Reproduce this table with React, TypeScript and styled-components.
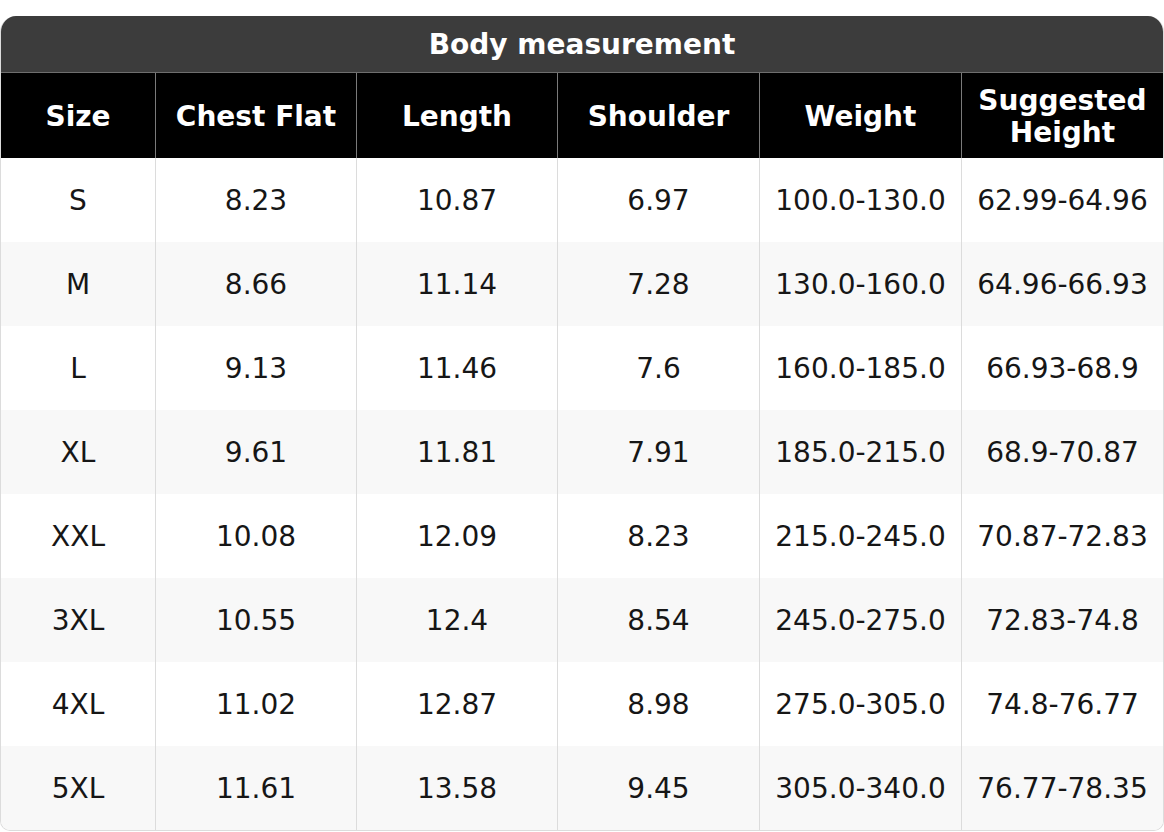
import React from 'react'
import styled, { createGlobalStyle } from 'styled-components'

const GlobalStyle = createGlobalStyle`
  html, body {
    margin: 0;
    padding: 0;
    background: #ffffff;
  }
  body {
    font-family: 'DejaVu Sans', 'Liberation Sans', sans-serif;
  }
`

const Page = styled.div`
  padding-top: 16px;
`

const Table = styled.section`
  box-sizing: border-box;
  width: 1164px;
  border: 1px solid #dcdcdc;
  border-top: none;
  border-radius: 16px 16px 10px 10px;
  overflow: hidden;
`

const Title = styled.div`
  height: 56px;
  background: #3c3c3c;
  color: #ffffff;
  font-weight: bold;
  font-size: 28px;
  display: flex;
  align-items: center;
  justify-content: center;
  border-bottom: 1px solid #6e6e6e;
  margin: 0 -1px;
`

const Row = styled.div<{ $head?: boolean; $alt?: boolean }>`
  display: grid;
  grid-template-columns: 154px 201px 201px 202px 202px 1fr;
  height: ${(p) => (p.$head ? 85 : 84)}px;
  background: ${(p) => (p.$head ? '#000000' : p.$alt ? '#f8f8f8' : '#ffffff')};
  color: ${(p) => (p.$head ? '#ffffff' : '#161616')};
  font-weight: ${(p) => (p.$head ? 'bold' : 'normal')};
  font-size: 28px;
`

const Cell = styled.div<{ $head?: boolean }>`
  box-sizing: border-box;
  display: flex;
  align-items: center;
  justify-content: center;
  text-align: center;
  line-height: 32px;
  padding-top: 2px;
  border-left: 1px solid ${(p) => (p.$head ? '#7a7a7a' : '#dcdcdc')};

  &:first-child {
    border-left: none;
  }
`

const headers = ['Size', 'Chest Flat', 'Length', 'Shoulder', 'Weight', 'Suggested Height']

const rows = [
  ['S', '8.23', '10.87', '6.97', '100.0-130.0', '62.99-64.96'],
  ['M', '8.66', '11.14', '7.28', '130.0-160.0', '64.96-66.93'],
  ['L', '9.13', '11.46', '7.6', '160.0-185.0', '66.93-68.9'],
  ['XL', '9.61', '11.81', '7.91', '185.0-215.0', '68.9-70.87'],
  ['XXL', '10.08', '12.09', '8.23', '215.0-245.0', '70.87-72.83'],
  ['3XL', '10.55', '12.4', '8.54', '245.0-275.0', '72.83-74.8'],
  ['4XL', '11.02', '12.87', '8.98', '275.0-305.0', '74.8-76.77'],
  ['5XL', '11.61', '13.58', '9.45', '305.0-340.0', '76.77-78.35'],
]

const App: React.FC = () => (
  <Page>
    <GlobalStyle />
    <Table>
      <Title>Body measurement</Title>
      <Row $head>
        {headers.map((h) => (
          <Cell key={h} $head>
            {h === 'Suggested Height' ? (
              <span>
                Suggested
                <br />
                Height
              </span>
            ) : (
              h
            )}
          </Cell>
        ))}
      </Row>
      {rows.map((r, i) => (
        <Row key={r[0]} $alt={i % 2 === 1}>
          {r.map((v, j) => (
            <Cell key={j}>{v}</Cell>
          ))}
        </Row>
      ))}
    </Table>
  </Page>
)

export default App
